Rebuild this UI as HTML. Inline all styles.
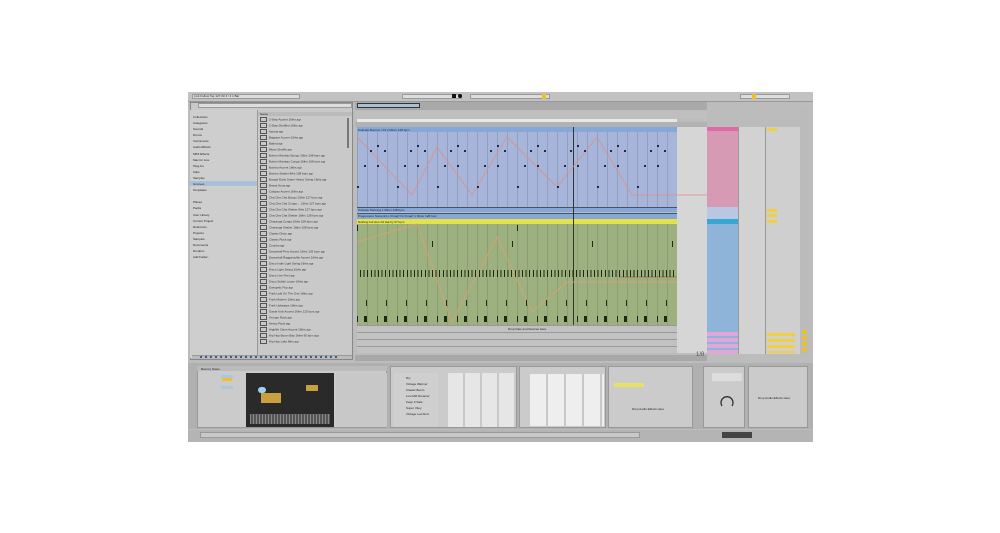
<!DOCTYPE html>
<html><head><meta charset="utf-8"><style>
*{margin:0;padding:0;box-sizing:border-box}
body{width:1000px;height:533px;background:#fff;position:relative;overflow:hidden;font-family:"Liberation Sans",sans-serif;font-size:3px;color:#333}
div{position:absolute}
.app{left:188px;top:92px;width:625px;height:350px;background:#bcbcbc}
.t{font-size:3px;white-space:nowrap;color:#222}
.li{left:260px;width:90px;height:6px;font-size:3px;white-space:nowrap}
.li:before{content:"";display:inline-block;width:5px;height:3px;border:0.5px solid #555;margin-right:2px;vertical-align:middle}
.dv{background:#cbcbcb;border:1px solid #999}
</style></head><body>
<div class="app"></div>
<div style="left:188px;top:92px;width:625px;height:10px;background:#c2c2c2;border-bottom:1px solid #999"></div>
<div style="left:192px;top:94px;width:108px;height:5px;background:#ddd;border:1px solid #999"></div>
<div class="t" style="left:194px;top:94px">Link  Follow  Tap  127.00  4 / 4  1 Bar</div>
<div style="left:402px;top:94px;width:60px;height:5px;background:#ddd;border:1px solid #999"></div>
<div style="left:452px;top:94px;width:4px;height:4px;background:#111"></div>
<div style="left:458px;top:94px;width:4px;height:4px;border-radius:50%;background:#111"></div>
<div style="left:470px;top:94px;width:80px;height:5px;background:#ddd;border:1px solid #999"></div>
<div style="left:542px;top:94px;width:4px;height:5px;background:#f0c020"></div>
<div style="left:740px;top:94px;width:50px;height:5px;background:#ddd;border:1px solid #999"></div>
<div style="left:752px;top:94px;width:4px;height:5px;background:#f0c020"></div>
<div style="left:190px;top:102px;width:163px;height:258px;background:#c9c9c9;border:1px solid #888"></div>
<div style="left:198px;top:103px;width:154px;height:5px;background:#ddd;border:1px solid #999"></div>
<div style="left:190px;top:110px;width:67px;height:248px;background:#cecece"></div>
<div style="left:190px;top:181px;width:67px;height:5px;background:#a8c0d8"></div>
<div class="t" style="left:193px;top:114px;line-height:6.1px;color:#222">Collections<br>Categories<br>Sounds<br>Drums<br>Instruments<br>Audio Effects<br>MIDI Effects<br>Max for Live<br>Plug-ins<br>Clips<br>Samples<br>Grooves<br>Templates<br><br>Places<br>Packs<br>User Library<br>Current Project<br>Reference<br>Projects<br>Samples<br>Documents<br>Dropbox<br>Add Folder...</div>
<div style="left:257px;top:110px;width:1px;height:248px;background:#999"></div>
<div style="left:258px;top:112px;width:94px;height:4px;background:#bbb"></div>
<div class="t" style="left:260px;top:112px">Name</div>
<div style="left:347px;top:118px;width:2px;height:30px;background:#777"></div>
<div class="li" style="top:117px">2-Step Accent 16ths.agr</div>
<div class="li" style="top:123px">2-Step Shuffled 16ths.agr</div>
<div class="li" style="top:129px">Apoxia.agr</div>
<div class="li" style="top:135px">Bagpipe Accent 16ths.agr</div>
<div class="li" style="top:141px">Baked.agr</div>
<div class="li" style="top:147px">Blues Shuffle.agr</div>
<div class="li" style="top:153px">Bolero Moisbao Bongo 16ths 108 bpm.agr</div>
<div class="li" style="top:159px">Bolero Moisbao Conga 16ths 108 bpm.agr</div>
<div class="li" style="top:165px">Bombo Accent 16ths.agr</div>
<div class="li" style="top:171px">Bombo Shaker 8ths 108 bpm.agr</div>
<div class="li" style="top:177px">Boogie Early Snare Heavy Swing 16ths.agr</div>
<div class="li" style="top:183px">Bossa Nova.agr</div>
<div class="li" style="top:189px">Calypso Accent 16ths.agr</div>
<div class="li" style="top:195px">Cha Cha Cha Bongo 16ths 127 bpm.agr</div>
<div class="li" style="top:201px">Cha Cha Cha Conga ... 16ths 127 bpm.agr</div>
<div class="li" style="top:207px">Cha Cha Cha Shaker 8ths 127 bpm.agr</div>
<div class="li" style="top:213px">Cha Cha Cha Shaker 16ths 128 bpm.agr</div>
<div class="li" style="top:219px">Charanga Conga 16ths 108 bpm.agr</div>
<div class="li" style="top:225px">Charanga Shaker 16ths 108 bpm.agr</div>
<div class="li" style="top:231px">Classic Disco.agr</div>
<div class="li" style="top:237px">Classic Rock.agr</div>
<div class="li" style="top:243px">Country.agr</div>
<div class="li" style="top:249px">Dancehall Perc Accent 16ths 103 bpm.agr</div>
<div class="li" style="top:255px">Dancehall Raggamuffin Accent 16ths.agr</div>
<div class="li" style="top:261px">Disco Indie Light Swing 16ths.agr</div>
<div class="li" style="top:267px">Disco Light Swing 16ths.agr</div>
<div class="li" style="top:273px">Disco Live Feel.agr</div>
<div class="li" style="top:279px">Disco Subtle Loose 16ths.agr</div>
<div class="li" style="top:285px">Energetic Pop.agr</div>
<div class="li" style="top:291px">Funk Laid On The One 16ths.agr</div>
<div class="li" style="top:297px">Funk Modern 16ths.agr</div>
<div class="li" style="top:303px">Funk Upbeatps 16ths.agr</div>
<div class="li" style="top:309px">Garde Kick Accent 16ths 125 bpm.agr</div>
<div class="li" style="top:315px">Grunge Rock.agr</div>
<div class="li" style="top:321px">Heavy Rock.agr</div>
<div class="li" style="top:327px">Highlife Clave Accent 16ths.agr</div>
<div class="li" style="top:333px">Hip Hop Boom Bap 16ths 90 bpm.agr</div>
<div class="li" style="top:339px">Hip Hop Lake 8ths.agr</div>
<div style="left:192px;top:355px;width:160px;height:4px;background:#bbb;border-top:1px solid #999"></div>
<div style="left:200px;top:356px;width:140px;height:2px;background:repeating-linear-gradient(90deg,#3a5a90 0 2px,#bbb 2px 5px)"></div>
<div style="left:355px;top:102px;width:352px;height:8px;background:#a9a9a9"></div>
<div style="left:357px;top:103px;width:63px;height:5px;background:#a9c0d6;border:1px solid #333"></div>
<div style="left:355px;top:111px;width:352px;height:8px;background:#bfbfbf"></div>
<div style="left:357px;top:119px;width:320px;height:3px;background:#e8e8e8"></div>
<div style="left:355px;top:122px;width:352px;height:5px;background:#b2b2b2"></div>
<div style="left:677px;top:127px;width:30px;height:226px;background:#d6d6d6"></div>
<div style="left:357px;top:127px;width:320px;height:80px;background:#a6b5d9;background-image:repeating-linear-gradient(90deg,rgba(0,0,0,.12) 0 1px,transparent 1px 10px)"></div>
<div style="left:357px;top:127px;width:320px;height:5px;background:#86a8d8"></div>
<div class="t" style="left:358px;top:128px;color:#123">Ostinato Bounce / F3 2 Minor 128 bpm</div>
<div style="left:357px;top:207px;width:320px;height:5px;background:#86a8d8;border-top:1px solid #456"></div>
<div class="t" style="left:358px;top:208px;color:#123">Ostinato Panning 1 Minor 128 bpm</div>
<div style="left:357px;top:213px;width:320px;height:6px;background:#86a8d8;border-top:1px solid #456"></div>
<div class="t" style="left:358px;top:214px;color:#123">Progression Numerics I-VImaj7-IV-VImaj7 1 Minor 128 bpm</div>
<div style="left:357px;top:219px;width:320px;height:5px;background:#e4e24a"></div>
<div class="t" style="left:358px;top:220px">Nothing but time 03 Hat by 67 bpm</div>
<div style="left:357px;top:224px;width:320px;height:101px;background:#9db07f;background-image:repeating-linear-gradient(90deg,rgba(0,0,0,.1) 0 1px,transparent 1px 10px)"></div>
<div style="left:573px;top:127px;width:1px;height:200px;background:#333"></div>
<svg style="position:absolute;left:357px;top:127px" width="350" height="200"><polyline fill="none" stroke="#e09080" stroke-width="1" opacity=".8" points="0,10 55,68 80,20 115,68 150,10 200,60 240,10 275,68 300,68 350,68"/><polyline fill="none" stroke="#e0a070" stroke-width="1" opacity=".8" points="0,115 60,97 95,195 140,110 175,185 210,155 320,155"/><line x1="320" y1="150" x2="262" y2="150" stroke="#c33" stroke-width=".5"/></svg>
<div style="left:357px;top:145px;width:320px;height:2px;background:repeating-linear-gradient(90deg,transparent 0 20px,#1a2a50 20px 22px,transparent 22px 40px)"></div>
<div style="left:357px;top:150px;width:320px;height:2px;background:repeating-linear-gradient(90deg,transparent 0 13px,#1a2a50 13px 15px,transparent 15px 27px,#1a2a50 27px 29px,transparent 29px 40px)"></div>
<div style="left:357px;top:165px;width:320px;height:2px;background:repeating-linear-gradient(90deg,transparent 0 7px,#1a2a50 7px 9px,transparent 9px 20px,#1a2a50 20px 22px,transparent 22px 40px)"></div>
<div style="left:357px;top:186px;width:320px;height:2px;background:repeating-linear-gradient(90deg,#1a2a50 0 2px,transparent 2px 40px)"></div>
<div style="left:357px;top:225px;width:320px;height:6px;background:repeating-linear-gradient(90deg,#1c2a12 0 1px,transparent 1px 160px)"></div>
<div style="left:357px;top:241px;width:320px;height:6px;background:repeating-linear-gradient(90deg,transparent 0 75px,#1c2a12 75px 76px,transparent 76px 80px)"></div>
<div style="left:360px;top:270px;width:315px;height:7px;background:repeating-linear-gradient(90deg,#1c2a12 0 1px,transparent 1px 3.6px)"></div>
<div style="left:366px;top:300px;width:310px;height:6px;background:repeating-linear-gradient(90deg,#1c2a12 0 1px,transparent 1px 20px)"></div>
<div style="left:357px;top:316px;width:320px;height:6px;background:repeating-linear-gradient(90deg,#1c2a12 0 1px,transparent 1px 7px,#1c2a12 7px 10px,transparent 10px 20px)"></div>
<div style="left:357px;top:325px;width:320px;height:28px;background:#c2c2c2;background-image:repeating-linear-gradient(180deg,#999 0 1px,transparent 1px 7px)"></div>
<div class="t" style="left:508px;top:327px">Drop Files and Devices Here</div>
<div style="left:355px;top:355px;width:352px;height:6px;background:#a8a8a8"></div>
<div class="t" style="left:696px;top:352px;font-size:6px;color:#555">1/8</div>
<div style="left:707px;top:120px;width:93px;height:6px;background:#bbb"></div>
<div style="left:707px;top:127px;width:31px;height:80px;background:#d79ab5"></div>
<div style="left:707px;top:127px;width:31px;height:4px;background:#e06aa8"></div>
<div style="left:707px;top:207px;width:31px;height:12px;background:#b8c8e0"></div>
<div style="left:707px;top:219px;width:31px;height:135px;background:#8fb4d9"></div>
<div style="left:707px;top:219px;width:31px;height:5px;background:#3aa6d8"></div>
<div style="left:738px;top:127px;width:27px;height:227px;background:#d2d2d2;border-left:1px solid #999"></div>
<div style="left:765px;top:127px;width:35px;height:227px;background:#cfcfcf;border-left:1px solid #999"></div>
<div style="left:767px;top:128px;width:10px;height:3px;background:#f0d040"></div>
<div style="left:767px;top:209px;width:10px;height:3px;background:#f0d040"></div>
<div style="left:767px;top:214px;width:10px;height:3px;background:#f0d040"></div>
<div style="left:767px;top:220px;width:10px;height:3px;background:#f0d040"></div>
<div style="left:707px;top:332px;width:31px;height:4px;background:#e0a8d8"></div>
<div style="left:707px;top:338px;width:31px;height:4px;background:#e0a8d8"></div>
<div style="left:707px;top:344px;width:31px;height:4px;background:#e0a8d8"></div>
<div style="left:707px;top:350px;width:31px;height:4px;background:#e0a8d8"></div>
<div style="left:767px;top:333px;width:28px;height:20px;background:repeating-linear-gradient(180deg,#f0d040 0 3px,transparent 3px 6px)"></div>
<div style="left:800px;top:110px;width:8px;height:245px;background:#bbb"></div>
<div style="left:802px;top:330px;width:5px;height:24px;background:repeating-linear-gradient(180deg,#e8c030 0 4px,#bbb 4px 6px)"></div>
<div style="left:188px;top:363px;width:625px;height:66px;background:#b0b0b0"></div>
<div class="dv" style="left:197px;top:366px;width:190px;height:62px"></div>
<div style="left:197px;top:366px;width:190px;height:5px;background:#bbb"></div>
<div class="t" style="left:201px;top:367px">Bouncy Notes</div>
<div style="left:221px;top:375px;width:12px;height:3px;background:#a8c8e0"></div>
<div style="left:221px;top:386px;width:12px;height:3px;background:#a8c8e0"></div>
<div style="left:222px;top:378px;width:10px;height:3px;background:#f0c030"></div>
<div style="left:246px;top:373px;width:88px;height:54px;background:#2a2a2a"></div>
<div style="left:261px;top:393px;width:20px;height:10px;background:#c8a040"></div>
<div style="left:306px;top:385px;width:12px;height:6px;background:#c8a040"></div>
<div style="left:258px;top:387px;width:8px;height:6px;background:#a0d0f0;border-radius:3px"></div>
<div style="left:250px;top:414px;width:80px;height:10px;background:repeating-linear-gradient(90deg,#888 0 1px,#555 1px 3px)"></div>
<div style="left:336px;top:373px;width:51px;height:54px;background:#c8c8c8"></div>
<div class="dv" style="left:390px;top:366px;width:127px;height:62px"></div>
<div style="left:394px;top:373px;width:44px;height:54px;background:#cfcfcf"></div>
<div class="t" style="left:406px;top:375px;line-height:6px">Dry<br>Vintage Warmer<br>Classic Boom<br>Low Mid Dreamer<br>Keep It Safe<br>Super Vitey<br>Vintage Low End</div>
<div style="left:448px;top:373px;width:66px;height:54px;background:repeating-linear-gradient(90deg,#e6e6e6 0 15px,#c8c8c8 15px 17px)"></div>
<div class="dv" style="left:519px;top:366px;width:87px;height:62px"></div>
<div style="left:530px;top:374px;width:74px;height:52px;background:repeating-linear-gradient(90deg,#eee 0 16px,#c8c8c8 16px 18px)"></div>
<div class="dv" style="left:608px;top:366px;width:85px;height:62px"></div>
<div style="left:614px;top:383px;width:30px;height:4px;background:#e8e060"></div>
<div class="t" style="left:632px;top:407px">Drop Audio Effects Here</div>
<div class="dv" style="left:703px;top:366px;width:42px;height:62px"></div>
<div style="left:712px;top:373px;width:30px;height:8px;background:#ddd"></div>
<svg style="position:absolute;left:719px;top:394px" width="16" height="16"><path d="M3,12 A6,6 0 1 1 13,12" fill="none" stroke="#333" stroke-width="1.3"/></svg>
<div class="dv" style="left:748px;top:366px;width:60px;height:62px"></div>
<div class="t" style="left:758px;top:396px">Drop Audio Effects Here</div>
<div style="left:188px;top:430px;width:625px;height:12px;background:#b4b4b4"></div>
<div style="left:200px;top:432px;width:440px;height:6px;background:#c8c8c8;border:1px solid #999"></div>
<div style="left:722px;top:432px;width:30px;height:6px;background:#444"></div>
</body></html>
